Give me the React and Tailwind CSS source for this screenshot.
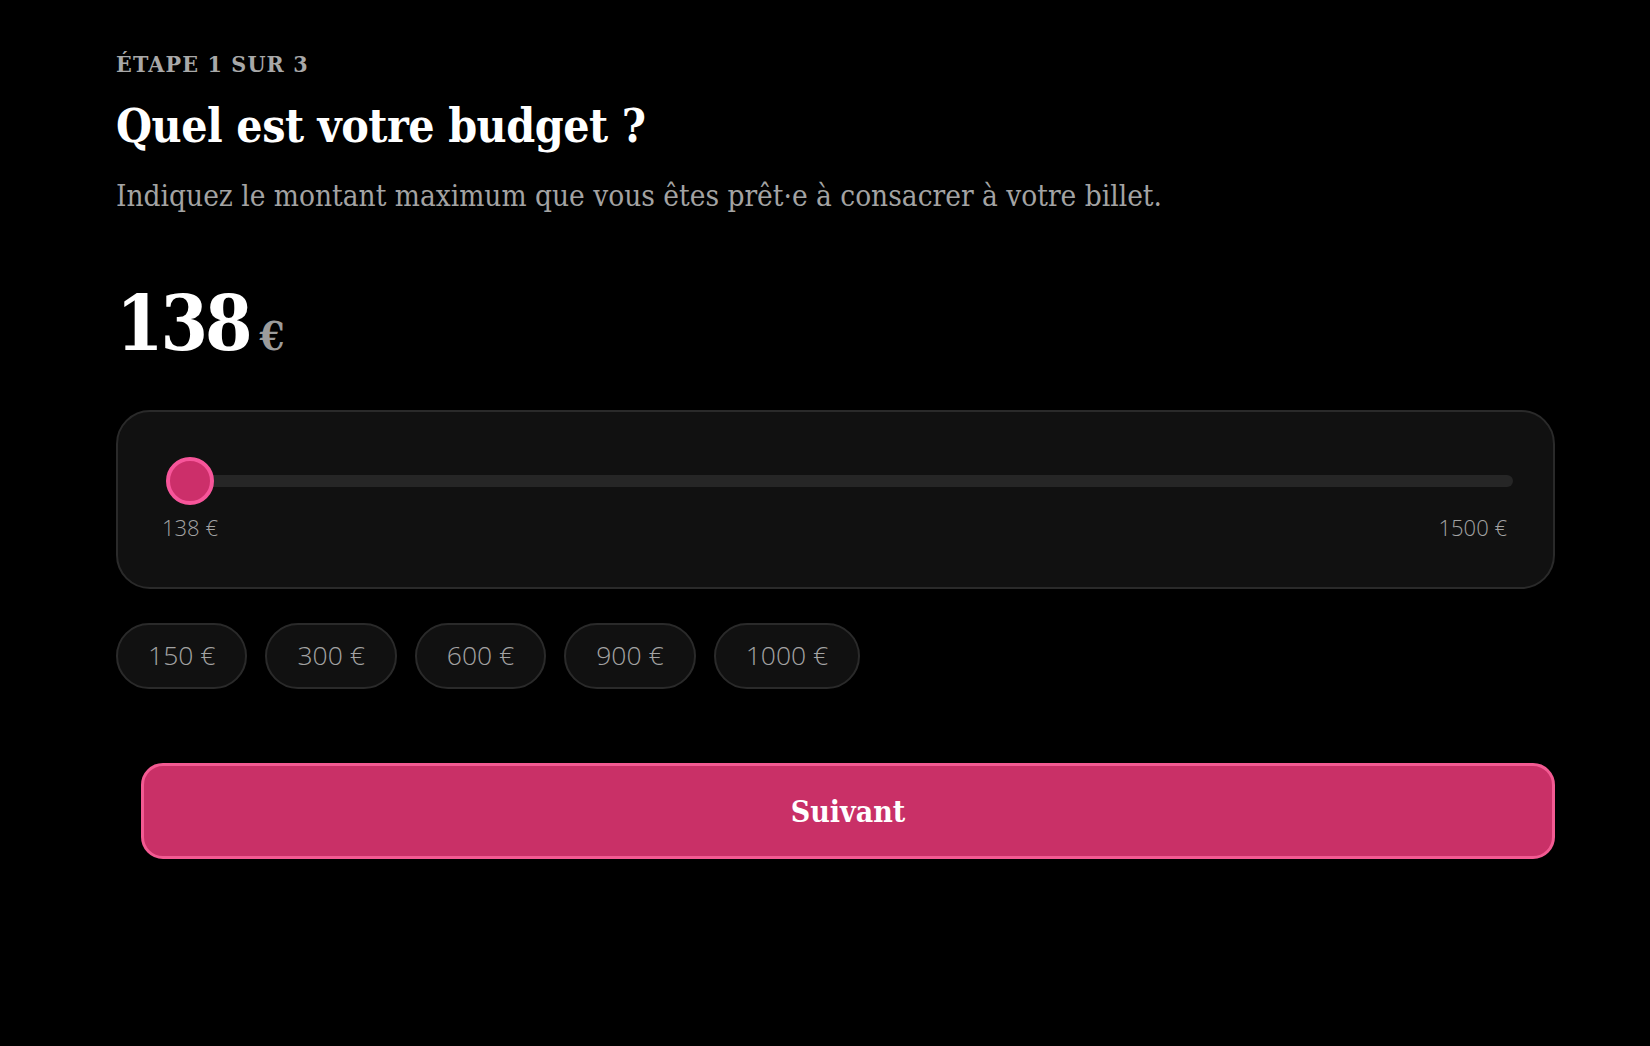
import React, { useState } from "react";

const serif = "font-['DejaVu_Serif_Condensed','DejaVu_Serif',serif]";
const sans = "font-['Open_Sans','Noto_Sans',sans-serif]";

const MIN = 138;
const MAX = 1500;
const presets = [150, 300, 600, 900, 1000];

export default function App() {
  const [budget, setBudget] = useState(MIN);
  const pct = ((budget - MIN) / (MAX - MIN)) * 100;

  return (
    <div className={`min-h-screen w-full bg-black text-white ${serif}`}>
      <div className="pl-[116px] pr-[95px] pt-[48px] pb-[120px]">
        {/* Header */}
        <div className="text-[23px] leading-[32px] tracking-[0.05em] font-semibold text-[#a8a8a8] uppercase">
          Étape 1 sur 3
        </div>
        <h1 className="mt-[14px] text-[46px] leading-[64px] font-bold tracking-[-0.01em]">
          Quel est votre budget ?
        </h1>
        <p className="mt-[18px] text-[29.5px] leading-[40px] text-[#a3a3a3]">
          Indiquez le montant maximum que vous êtes prêt·e à consacrer à votre billet.
        </p>

        {/* Value */}
        <div className="mt-[60px] flex items-baseline gap-[10px] h-[96px]">
          <span className="text-[76px] leading-[96px] font-bold tracking-[-0.04em]">{budget}</span>
          <span className="text-[40px] leading-none font-bold text-[#9c9c9c]">€</span>
        </div>

        {/* Slider card */}
        <div className="mt-[38px] h-[179px] rounded-[34px] border-2 border-[#2a2a2a] bg-[#111111] pl-[48px] pr-[40px] pt-[45px]">
          <div className="relative h-[48px]">
            <div className="absolute inset-x-0 top-1/2 -translate-y-1/2 h-[12px] rounded-full bg-[#262626]" />
            <div
              className="absolute top-0 size-[48px] rounded-full border-4 border-[#f7559a] bg-[#cc2f6a]"
              style={{ left: `calc(${pct}% - ${(pct / 100) * 48}px)` }}
            />
          </div>
          <div className={`mt-[8px] -ml-[4px] mr-[6px] flex justify-between text-[22px] leading-[28px] font-light text-[#a3a3a3] ${sans}`}>
            <span>{MIN} €</span>
            <span>{MAX} €</span>
          </div>
        </div>

        {/* Presets */}
        <div className="mt-[34px] flex gap-[18px]">
          {presets.map((p) => (
            <button
              key={p}
              onClick={() => setBudget(p)}
              className={`h-[66px] px-[30px] rounded-full border-2 border-[#2a2a2a] bg-[#111111] text-[26.5px] font-light text-[#a3a3a3] ${sans}`}
            >
              {p} €
            </button>
          ))}
        </div>

        {/* Next */}
        <button className="mt-[74px] ml-[25px] w-[calc(100%-25px)] h-[96px] rounded-[22px] border-[3px] border-[#f35a92] bg-[#c93067] text-[30px] font-bold text-white block">
          Suivant
        </button>
      </div>
    </div>
  );
}
